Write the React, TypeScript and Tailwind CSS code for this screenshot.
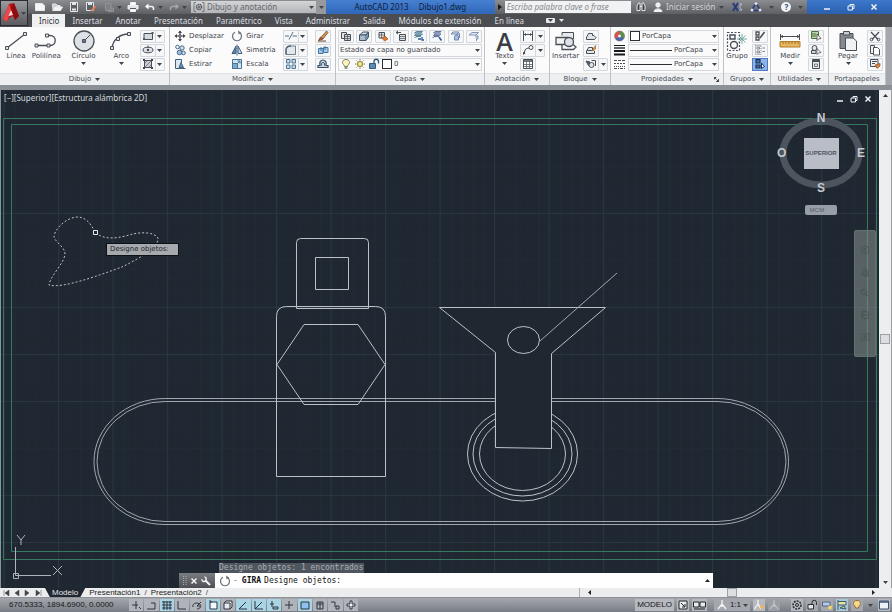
import React, { useState } from 'react';
import clsx from 'clsx';

type IconProps = {
  w?: number;
  h?: number;
  color?: string;
  children: React.ReactNode;
};

function Icon({ w = 12, h = 12, color = '#4a4f57', children }: IconProps) {
  return (
    <svg
      width={w}
      height={h}
      viewBox={`0 0 ${w} ${h}`}
      fill="none"
      stroke={color}
      strokeWidth={1}
      className="shrink-0"
      aria-hidden="true"
    >
      {children}
    </svg>
  );
}

function Caret({ light = false }: { light?: boolean }) {
  return (
    <svg width="5" height="3" viewBox="0 0 5 3" className="shrink-0" aria-hidden="true">
      <path d="M0 0H5L2.5 3Z" fill={light ? '#e5e7eb' : '#3f444b'} />
    </svg>
  );
}

const icons = {
  rect: <Icon><path d="M2 3.5H10.5V9.5H2Z" fill="#d3d9df" /><path d="M1 8H3V10H1ZM9.5 2H11.5V4H9.5Z" fill="#555" stroke="none" /></Icon>,
  ellipse: <Icon><ellipse cx="6" cy="6" rx="5" ry="2.8" fill="#dde2e8" /><circle cx="6" cy="6" r="1.2" fill="#444" stroke="none" /><path d="M6 1.5V4" /></Icon>,
  hatch: <Icon><path d="M2.5 2.5H9.5V9.5H2.5Z" fill="#c9ced4" /><path d="M2 6L6 2M2 10L10 2M6 10L10 6" strokeWidth=".6" /><path d="M1 1H3V3H1ZM9 1H11V3H9ZM1 9H3V11H1ZM9 9H11V11H9Z" fill="#444" stroke="none" /></Icon>,
  move: <Icon><path d="M6 1V11M1 6H11" strokeWidth="1.2" /><path d="M4 3L6 .5L8 3ZM4 9L6 11.5L8 9ZM3 4L.5 6L3 8ZM9 4L11.5 6L9 8Z" fill="#444" stroke="none" /><path d="M5 5H7V7H5Z" fill="#fff" /></Icon>,
  copy: <Icon color="#46698c"><circle cx="3.5" cy="3" r="1.8" /><circle cx="8" cy="4" r="2.2" fill="#cfe0ee" /><circle cx="5.5" cy="8.5" r="2.3" fill="#9ebdd6" /><circle cx="9.5" cy="9" r="1.8" fill="#cfe0ee" /></Icon>,
  stretch: <Icon color="#45627d"><path d="M1.5 1.5H7.5V10.5H1.5Z" fill="#dbe7f1" /><path d="M5 9.5L7 4.5L9.5 9.5Z" fill="#6e94b5" /><path d="M6 10.5H11.5" /></Icon>,
  rotate: <Icon color="#6a7078"><path d="M4 2.2A4.5 4.5 0 1 0 8.5 2.5" strokeWidth="1.2" /><path d="M7 .5L10 2.5L7.5 4.5Z" fill="#6a7078" stroke="none" /></Icon>,
  mirror: <Icon color="#3f5f80"><path d="M5 2V9.5H1Z" fill="#5d83a6" /><path d="M7 2V9.5H11Z" fill="#c9dbe9" /><path d="M6 .5V11.5" strokeDasharray="2 1" /></Icon>,
  scale: <Icon color="#44729a"><path d="M1.5 1.5H10.5V10.5H1.5Z" fill="#d2e4f1" /><path d="M1.5 5.5H6.5V10.5H1.5Z" fill="#7fa9c9" /><path d="M6 6L9 3M6.5 3H9V5.5" /></Icon>,
  trim: <Icon color="#5b6f83"><path d="M0 6H4M7.5 6H12" strokeWidth="1.2" /><path d="M4 9.5L8 2" /></Icon>,
  fillet: <Icon color="#556270"><path d="M1 10.5V6C1 3 3 2 6 2H10.5V10.5Z" fill="#e3e8ec" strokeWidth=".8" /><path d="M1 10.5V6C1 3 3 2 6 2" strokeWidth="1.3" /></Icon>,
  array: <Icon color="#4d7598"><path d="M1.5 1.5H5V5H1.5ZM7 1.5H10.5V5H7ZM1.5 7H5V10.5H1.5ZM7 7H10.5V10.5H7Z" fill="#c9dcea" /></Icon>,
  erase: <Icon color="#6b4a2a"><path d="M4 7.5L9.5 1L11 2.5L6 9Z" fill="#d99a4e" strokeWidth=".8" /><path d="M1.5 10.5L3.5 7L6 9Z" fill="#c4523f" strokeWidth=".8" /><path d="M1 11H9" /></Icon>,
  explode: <Icon color="#3d75a8"><path d="M1.5 4.5H6V9.5H1.5ZM6.5 3.5H11V8.5H6.5Z" fill="#a7c9e4" /><path d="M4 3V7M8 2V6" /></Icon>,
  offset: <Icon color="#35506b"><path d="M1 9.5H11V7.5H9C10 4 8 2 6 2S2 4 3 7.5H1Z" fill="#c8d4de" strokeWidth="1.2" /><path d="M4.5 7.5C4 5 5 4.5 6 4.5S8 5 7.5 7.5" /></Icon>,
  layer1: <Icon><path d="M1.5 2.5H6.5V8.5H1.5Z" fill="#e3e3e3" /><path d="M4.5 4.5H10.5V10.5H4.5Z" fill="#cdd3d9" /><path d="M5 6.5H10M5 8.5H10M7.5 5V10" strokeWidth=".7" /></Icon>,
  layer2: <Icon color="#44546a"><path d="M1.5 5L5 2H10.5L8 5Z" fill="#cfdbe6" /><path d="M1.5 5H8V10.5H1.5Z" fill="#a9bccd" /><path d="M8 5L10.5 2V7L8 10.5" fill="#7a93a9" /></Icon>,
  layer3: <Icon><path d="M2 2.5H7.5V8H2Z" fill="#e4e6e8" /><path d="M2 5H8M4.5 2.5V8" strokeWidth=".7" /><path d="M5 8L8 6L11 9L7.5 11Z" fill="#dc7b32" stroke="#a4511d" strokeWidth=".7" /></Icon>,
  layer4: <Icon><path d="M1 2.5H6M1 2.5L3 1M1 2.5L3 4" /><path d="M4.5 4.5H10.5V10.5H4.5Z" fill="#dfe2e5" /><path d="M5 6.5H10M5 8.5H10" strokeWidth=".7" /></Icon>,
  layer5: <Icon color="#3f6f86"><path d="M1.5 3L3.5 1.5H9.5L8 3ZM1.5 5.5L3 4H9.5L8 5.5ZM1.5 8L3 6.5H8" fill="#9fc7d8" strokeWidth=".8" /><path d="M5 9H8M9 7V10H11" stroke="#275a94" strokeWidth="1.3" /></Icon>,
  layer6: <Icon color="#4a5f86"><path d="M2.5 3L4 1.5H10L8.5 3ZM2.5 5.5L4 4H10L8.5 5.5ZM1.5 8L3 6.5H8" fill="#b2c2e0" strokeWidth=".8" /><path d="M8 7L10.5 10.5" stroke="#2c55a4" strokeWidth="1.5" /></Icon>,
  layer7: <Icon color="#7385ad"><path d="M1 4L3 2H9L7 4Z" fill="#dfe6f2" /><path d="M6 5.5L9.5 3.5V8" /><path d="M4.5 7A2 2 0 0 1 8.5 7V10H4.5Z" fill="#a9bfe8" /></Icon>,
  layer8: <Icon color="#8593b5"><path d="M1 5L4 2.5H10.5L8 5Z" fill="#e1e7f1" /><path d="M7 6H10V9H8.5V11" fill="#b8c7e7" /></Icon>,
  bulb: <Icon color="#7c7a60"><path d="M6 1.5C3.5 1.5 2.5 3 2.5 4.5C2.5 6 4.5 7 4.5 8.5H7.5C7.5 7 9.5 6 9.5 4.5C9.5 3 8.5 1.5 6 1.5Z" fill="#fbf5bd" /><path d="M4.5 10H7.5" strokeWidth="1.5" /></Icon>,
  sun: <Icon color="#7c7434"><circle cx="6" cy="6" r="2.5" fill="#fbee8c" /><path d="M6 1V2.5M6 9.5V11M1 6H2.5M9.5 6H11M2.5 2.5L3.5 3.5M8.5 8.5L9.5 9.5M2.5 9.5L3.5 8.5M8.5 3.5L9.5 2.5" /></Icon>,
  lock: <Icon color="#365a7d"><path d="M1.5 5.5H7.5V10.5H1.5Z" fill="#5d8ab0" /><path d="M6 5V3.5A2 2 0 0 1 10.5 3.5V5.5" strokeWidth="1.3" /></Icon>,
  dim: <Icon><path d="M1.5 1V11M10.5 1V11M2 4.5H10" /><path d="M2 4.5L4 3V6ZM10 4.5L8 3V6Z" fill="#444" stroke="none" /></Icon>,
  leader: <Icon><path d="M2 10C2.5 5 4 4 7 4" strokeWidth="1.2" /><circle cx="9" cy="3.5" r="2" /><path d="M1 11L1 8L3.5 9Z" fill="#444" stroke="none" /></Icon>,
  table: <Icon><path d="M1.5 1.5H10.5V10.5H1.5Z" fill="#fff" /><path d="M2 2H10V4H2Z" fill="#69727d" stroke="none" /><path d="M1.5 6.5H10.5M1.5 8.5H10.5M4.5 4V10.5M7.5 4V10.5" strokeWidth=".7" /></Icon>,
  block1: <Icon><path d="M2 6.5L3.5 3.5H7.5V6.5Z" fill="#e3e7eb" /><path d="M1.5 6.5V9.5H9.5L11 7.5L9 5.5H7.5" fill="#dde5ec" /></Icon>,
  block2: <Icon><path d="M2 6.5L3.5 3.5H7.5V6.5ZM1.5 6.5V9.5H9.5V7" fill="#e3e7eb" /><path d="M7.5 6L10.5 1.5V5L8 7Z" fill="#e39543" stroke="#a4622a" strokeWidth=".7" /></Icon>,
  block3: <Icon><path d="M1 3L5 4L3.5 7.5Z" fill="#59626c" /><circle cx="6.5" cy="7" r="2.5" fill="#dfe6ec" /><path d="M6.5 2.5H10.5V8" /></Icon>,
  wheel: <Icon w={13}><circle cx="6.5" cy="6" r="5" fill="#d9534a" stroke="#8d7474" strokeWidth=".6" /><path d="M6.5 6V1A5 5 0 0 1 11 8Z" fill="#5a8f4e" stroke="none" /><path d="M6.5 6L11 8A5 5 0 0 1 2.5 9Z" fill="#4469ae" stroke="none" /><circle cx="6.5" cy="6" r="1.5" fill="#eee" stroke="none" /></Icon>,
  lineweight: <Icon w={13} color="#15181c"><path d="M1 1.5H12" /><path d="M1 4H12" strokeWidth="1.3" /><path d="M1 7H12" strokeWidth="2" /><path d="M1 10.5H12" strokeWidth="2" /></Icon>,
  linetype: <Icon w={13}><path d="M1 2.5H12" strokeDasharray="3 1" /><path d="M1 5.5H12" strokeDasharray="2 1" /><path d="M1 8.5H12" strokeDasharray="1 1" /><path d="M1 10.5H12" strokeDasharray="3 1 1 1" /></Icon>,
  group1: <Icon><path d="M2 2H5V5H2ZM2 7H5V10H2Z" strokeWidth="1.3" /><path d="M6 8L10.5 2" strokeWidth="1.6" /></Icon>,
  group2: <Icon color="#808790"><path d="M1.5 1.5H7V10.5H1.5Z" strokeDasharray="1 1" /><path d="M3 3H5.5V5H3ZM3 7H5.5V9H3Z" /><path d="M8.5 4H11M8.5 7.5H11" /></Icon>,
  group3: <Icon w={14} color="#14305c"><path d="M3 1.5H7V5H3ZM3 7H7V10H3Z" fill="#4f6f9f" strokeWidth="1.2" /><path d="M8.5 5V10.5L11.5 8.5Z" fill="#fff" /></Icon>,
  select1: <Icon color="#4b7042"><path d="M1.5 1.5H8.5V8.5H1.5Z" fill="#b8d6a8" /><path d="M3 3V7M5 3V7" /><path d="M7 4V10.5L8.5 9L11 8.5Z" fill="#fff" stroke="#444" strokeWidth=".8" /></Icon>,
  select2: <Icon><circle cx="4.5" cy="4" r="2.5" fill="#e3e7eb" /><path d="M1.5 6.5H6V9.5H1.5Z" fill="#cfd6dc" /><path d="M7 4.5V10.5L8.5 9L11 8.5Z" fill="#fff" strokeWidth=".8" /></Icon>,
  calc: <Icon><path d="M2.5 1.5H9.5V10.5H2.5Z" fill="#e6e9ec" /><path d="M3 3H9" strokeWidth="2" /><path d="M4.5 6H7.5V8.5H4.5Z" strokeWidth=".7" /></Icon>,
  cut: <Icon><path d="M2 2L9 9.5M10 2L3 9.5" strokeWidth="1.3" /><circle cx="2.5" cy="9.5" r="1.3" /><circle cx="9.5" cy="9.5" r="1.3" /></Icon>,
  copyClip: <Icon><path d="M1.5 1.5H5.5V9.5H1.5Z" fill="#eef0f2" /><path d="M4.5 3.5H8.5L10.5 5.5V11H4.5Z" fill="#fff" /></Icon>,
  paint: <Icon><path d="M1.5 1.5H9V8.5H1.5Z" fill="#eceef1" /><path d="M3 3.5H8M3 5.5H6" /><path d="M6 7L11 5.5V8L8 10.5Z" fill="#d98344" stroke="#8d5022" strokeWidth=".7" /></Icon>,
};

type ToolProps = { label: string; icon: React.ReactNode; menu?: boolean; className?: string };

function BigTool({ label, icon, menu, className }: ToolProps) {
  return (
    <button className={clsx('flex flex-col items-center self-stretch pt-[3px] leading-[9px]', className)}>
      <span className="flex h-[22px] items-center">{icon}</span>
      <span>{label}</span>
      {menu && <span className="flex h-[5px] items-center"><Caret /></span>}
    </button>
  );
}

function SmallTool({ label, icon, menu }: ToolProps) {
  return (
    <button
      aria-label={label}
      className="flex h-[13px] items-center rounded-[1px] border border-[#d3d6da] bg-[#f6f7f8]"
    >
      <span className="px-[1px]">{icon}</span>
      {menu && (
        <span className="flex h-full w-[9px] items-center justify-center border-l border-[#d3d6da]">
          <Caret />
        </span>
      )}
    </button>
  );
}

function TextTool({ label, icon }: ToolProps) {
  return (
    <button className="flex h-[13px] items-center gap-[3px]">
      {icon}
      <span>{label}</span>
    </button>
  );
}

type PanelProps = {
  title: string;
  children: React.ReactNode;
  caret?: boolean;
  launcher?: boolean;
  tight?: boolean;
};

function Panel({ title, children, caret = true, launcher, tight }: PanelProps) {
  return (
    <section className="flex min-w-0 flex-col border-r border-[#bfc3c8]">
      <div className={clsx('flex h-[46px] items-center justify-between', tight ? 'px-[2px]' : 'px-1')}>
        {children}
      </div>
      <h2 className="relative flex h-3 items-center justify-center gap-1 border-t border-[#e0e2e5] bg-[#eeeff1] text-[#4a4f56]">
        {title}
        {caret && <Caret />}
        {launcher && (
          <svg width="5" height="5" viewBox="0 0 5 5" className="absolute right-1" aria-hidden="true">
            <path d="M0 0H2V1H1V2H0ZM1 1L4 4M5 2V5H2Z" fill="#3f444b" stroke="#3f444b" strokeWidth=".6" />
          </svg>
        )}
      </h2>
    </section>
  );
}

function Column({ children }: { children: React.ReactNode }) {
  return <div className="flex flex-col items-start gap-[1px]">{children}</div>;
}

type ComboProps = { label: string; value: string; children?: React.ReactNode };

function Combo({ label, value, children }: ComboProps) {
  return (
    <div className="flex h-[13px] w-full items-center gap-[2px] border border-[#d3d6da] bg-[#fafafa] px-[1px]">
      {children}
      <select aria-label={label} className="min-w-0 flex-1 appearance-none bg-transparent outline-none">
        <option>{value}</option>
      </select>
      <Caret />
    </div>
  );
}

const tabs = [
  'Inicio', 'Insertar', 'Anotar', 'Presentación', 'Paramétrico', 'Vista',
  'Administrar', 'Salida', 'Módulos de extensión', 'En línea',
];

function WindowButtons() {
  return (
    <>
      <button aria-label="Minimizar"><Icon w={8} h={8} color="#f1f3f6"><path d="M1 6H7" strokeWidth="1.5" /></Icon></button>
      <button aria-label="Restaurar"><Icon w={8} h={8} color="#f1f3f6"><path d="M1 3H5.5V7H1ZM3 3V1.5H7V5.5H5.5" /></Icon></button>
      <button aria-label="Cerrar"><Icon w={8} h={8} color="#f1f3f6"><path d="M1.5 1.5L6.5 6.5M6.5 1.5L1.5 6.5" strokeWidth="1.5" /></Icon></button>
    </>
  );
}

function TitleBar() {
  return (
    <div className="flex h-[14px] items-center bg-linear-to-b from-[#8b8d91] to-[#5d5f63]">
      <nav className="flex w-[163px] shrink-0 items-center justify-between pr-1 pl-[6px]" aria-label="Acceso rápido">
        <button aria-label="Nuevo"><Icon color="#e8eaec"><path d="M1.5 2.5H8L10.5 4.5V9.5H1.5Z" fill="#f5f5f5" /></Icon></button>
        <button aria-label="Abrir"><Icon color="#e8eaec"><path d="M1.5 3H5L6 4.5H9V6H4L2 9.5Z" fill="#c9ccd0" /><path d="M2 9.5L4 6H11.5L9.5 9.5Z" fill="#f5f5f5" /></Icon></button>
        <button aria-label="Guardar"><Icon color="#e3e6ea"><path d="M2.5 1.5H9.5V10.5H2.5Z" fill="#5a5f68" /><path d="M4 3H8M4 8.5H8" strokeWidth="2" /></Icon></button>
        <button aria-label="Guardar como"><Icon color="#e3e6ea"><path d="M1.5 1.5H8.5V9.5H1.5Z" fill="#5a5f68" /><path d="M3 3H7" strokeWidth="2" /><path d="M6 10L10.5 5.5" stroke="#e47b4e" strokeWidth="2" /></Icon></button>
        <button aria-label="Nube" className="flex items-center gap-[2px]"><Icon color="#909398"><path d="M2.5 2.5H8V9.5H2.5ZM8 7H10.5V10.5H5" fill="#7d8085" /></Icon><Caret /></button>
        <button aria-label="Trazar"><Icon color="#eceef0"><path d="M3.5 1.5H8.5V4H3.5ZM3.5 8H8.5V10.5H3.5Z" fill="#fff" /><path d="M1 4.5H11V8H1Z" fill="#e4e6e9" /><path d="M3 7.5H9" stroke="#55585d" /></Icon></button>
        <button aria-label="Deshacer" className="flex items-center gap-[2px]"><Icon color="#f4f5f6"><path d="M2 5.5H7.5A2 2 0 0 1 9.5 7.5V9" strokeWidth="1.5" /><path d="M4.5 2.5L1 5.5L4.5 8.5Z" fill="#fff" stroke="none" /></Icon><Caret /></button>
        <button aria-label="Rehacer" className="flex items-center gap-[2px]"><Icon color="#a3a6ab"><path d="M10 5.5H4.5A2 2 0 0 0 2.5 7.5V9" strokeWidth="1.5" /><path d="M7.5 2.5L11 5.5L7.5 8.5Z" fill="#a3a6ab" stroke="none" /></Icon><Caret /></button>
      </nav>
      <div className="flex h-3 w-[125px] shrink-0 items-center gap-[2px] bg-linear-to-b from-[#d4d5d7] to-[#b3b5b8] px-[2px] text-[8px] text-[#64676c]">
        <Icon color="#55585d"><circle cx="6" cy="6" r="2.5" strokeDasharray="1.5 .5" strokeWidth="1.5" /><circle cx="6" cy="6" r=".7" /><path d="M3 1.5H1V10.5H3M9 1.5H11V10.5H9" strokeWidth=".7" /></Icon>
        <select aria-label="Espacio de trabajo" className="min-w-0 flex-1 appearance-none bg-transparent outline-none">
          <option>Dibujo y anotación</option>
        </select>
        <Caret />
      </div>
      <button aria-label="Personalizar" className="flex h-full w-[10px] shrink-0 items-center justify-center bg-[#97999d]"><Caret /></button>
      <h1 className="flex h-full min-w-0 flex-[171] items-center justify-center gap-[10px] bg-linear-to-b from-[#4680d0] to-[#3067b9] text-[8px] whitespace-nowrap text-[#0d1d3a]">
        <span>AutoCAD 2013</span>
        <span>Dibujo1.dwg</span>
      </h1>
      <span className="flex w-[10px] justify-center">
        <svg width="4" height="6" viewBox="0 0 4 6" aria-hidden="true"><path d="M0 0L4 3L0 6Z" fill="#17191c" /></svg>
      </span>
      <input
        aria-label="Buscar"
        placeholder="Escriba palabra clave o frase"
        className="h-3 min-w-0 flex-[124] bg-[#f1f2f3] px-[2px] text-[8px] italic outline-none placeholder:text-[#85888d]"
      />
      <div className="flex w-[176px] shrink-0 items-center pl-1">
        <button aria-label="Buscar ahora" className="mr-[5px]"><Icon color="#e6e8ea"><path d="M2 9.5V5L3.5 2H5V9.5ZM7 9.5V2H8.5L10 5V9.5Z" fill="#3b3e43" /><path d="M5 5.5H7" /></Icon></button>
        <button className="flex items-center gap-[2px] text-[8px] text-[#d2d4d7]">
          <Icon color="#f0f1f2"><circle cx="6" cy="4" r="2.2" fill="#f0f1f2" /><path d="M2 10.5C2 7 10 7 10 10.5Z" fill="#f0f1f2" /></Icon>
          Iniciar sesión
        </button>
        <span className="flex flex-1 items-center justify-around">
          <Caret />
          <button aria-label="Exchange"><Icon color="#2b3a7d"><path d="M2 2L7 10M2 10L7 2" strokeWidth="2" /><path d="M8 3H11L8.5 6L11 9H8" stroke="#b5b9da" /></Icon></button>
          <button aria-label="Autodesk 360"><Icon color="#2e3d77"><path d="M6 2L10.5 9.5H1.5Z" strokeWidth="1.5" /><circle cx="6" cy="2.5" r="1.5" fill="#dfe1ee" stroke="none" /><circle cx="2" cy="9" r="1.5" fill="#dfe1ee" stroke="none" /><circle cx="10" cy="9" r="1.5" fill="#dfe1ee" stroke="none" /></Icon></button>
          <Caret />
          <button aria-label="Ayuda" className="flex h-[10px] w-[10px] items-center justify-center rounded-full bg-[#f3f4f6] text-[8px] font-bold text-[#2d4a86]">?</button>
          <Caret />
        </span>
      </div>
      <div className="flex h-full w-[85px] shrink-0 items-center justify-between bg-linear-to-b from-[#3d78ca] to-[#2b60b0] pr-[14px] pl-4">
        <WindowButtons />
      </div>
    </div>
  );
}

function Header() {
  const [active, setActive] = useState('Inicio');

  return (
    <header className="flex bg-[#4b4d51]">
      <button aria-label="Menú de la aplicación" className="flex h-[26px] w-7 shrink-0 items-center gap-[1px] border border-[#2b2c2f] bg-linear-to-b from-[#9a9c9f] to-[#595b5f] pl-[1px]">
        <svg width="18" height="22" viewBox="0 0 18 22" className="shrink-0" aria-hidden="true">
          <path d="M1 17L7 2L12 1L17 14L13 18L11 14L7 16L5 20Z" fill="#b3141a" />
          <path d="M1 17L7 2L9 8L5 20Z" fill="#e8484a" />
          <path d="M9 8L11 13L6.500 14Z" fill="#fbe3e1" />
          <path d="M12 1L17 14L13 18L9 6Z" fill="#8d0d12" />
        </svg>
        <Caret />
      </button>
      <div className="min-w-0 flex-1">
        <TitleBar />
        <nav className="flex h-[13px] items-stretch pl-1 text-[8px] whitespace-nowrap" aria-label="Cinta">
          {tabs.map((tab) => (
            <button
              key={tab}
              onClick={() => setActive(tab)}
              className={clsx(
                'pr-[6px] pl-[7px] leading-[13px]',
                tab === active ? 'bg-[#eff0f1] text-[#33363b]' : 'text-[#dcdee0]',
              )}
            >
              {tab}
            </button>
          ))}
          <button aria-label="Minimizar cinta" className="ml-4 flex items-center gap-1">
            <span className="flex h-[5px] w-[9px] items-center justify-center rounded-[1px] bg-[#e5e7eb]"><Caret /></span>
            <Caret light />
          </button>
        </nav>
      </div>
    </header>
  );
}

function Ribbon() {
  return (
    <div className="flex border-b-[5px] border-[#8c9097] bg-[#fbfbfc] font-['DejaVu_Sans',sans-serif] text-[7px] whitespace-nowrap text-[#3e434a]">
      <div className="grid flex-1 grid-cols-[170fr_166fr_149fr_65fr_61fr_113fr_47fr_58fr_57fr]">
        <Panel title="Dibujo">
          <BigTool label="Línea" icon={<Icon w={24} h={20}><path d="M3 17L21 3" strokeWidth="1.3" /><path d="M1.5 15.5H4.5V18.5H1.5ZM19.5 1.5H22.5V4.5H19.5Z" fill="#dfe3e7" /></Icon>} />
          <BigTool label="Polilínea" icon={<Icon w={24} h={20}><path d="M13 4.5H16C23 4.5 23 14.5 16 14.5H2" strokeWidth="1.3" /><path d="M11.5 3H14.5V6H11.5ZM1 13H4V16H1ZM13 13H16V16H13Z" fill="#dfe3e7" /></Icon>} />
          <BigTool menu className="w-[38px]" label="Círculo" icon={<Icon w={24} h={22}><circle cx="12" cy="11" r="10" fill="#dde1e6" strokeWidth="1.3" /><path d="M12 11L18 5" /><path d="M10.5 9.5H13.5V12.5H10.5Z" fill="#69798c" /></Icon>} />
          <BigTool menu className="w-[30px]" label="Arco" icon={<Icon w={24} h={20}><path d="M3 17C4 9 10 3 20 3" strokeWidth="1.3" /><path d="M1.5 15.5H4.5V18.5H1.5ZM7.5 6.5H10.5V9.5H7.5ZM18.5 1.5H21.5V4.5H18.5Z" fill="#dfe3e7" /></Icon>} />
          <Column>
            <SmallTool menu label="Rectángulo" icon={icons.rect} />
            <SmallTool menu label="Elipse" icon={icons.ellipse} />
            <SmallTool menu label="Sombreado" icon={icons.hatch} />
          </Column>
        </Panel>
        <Panel title="Modificar">
          <Column>
            <TextTool label="Desplazar" icon={icons.move} />
            <TextTool label="Copiar" icon={icons.copy} />
            <TextTool label="Estirar" icon={icons.stretch} />
          </Column>
          <Column>
            <TextTool label="Girar" icon={icons.rotate} />
            <TextTool label="Simetría" icon={icons.mirror} />
            <TextTool label="Escala" icon={icons.scale} />
          </Column>
          <Column>
            <SmallTool menu label="Recortar" icon={icons.trim} />
            <SmallTool menu label="Empalme" icon={icons.fillet} />
            <SmallTool menu label="Matriz" icon={icons.array} />
          </Column>
          <Column>
            <SmallTool label="Borrar" icon={icons.erase} />
            <SmallTool label="Descomponer" icon={icons.explode} />
            <SmallTool label="Desfase" icon={icons.offset} />
          </Column>
        </Panel>
        <Panel title="Capas" tight>
          <div className="flex w-full flex-col gap-[1px]">
            <div className="flex justify-between">
              <SmallTool label="Propiedades de capas" icon={icons.layer1} />
              <SmallTool label="Definir como actual" icon={icons.layer2} />
              <SmallTool label="Igualar" icon={icons.layer3} />
              <SmallTool label="Previo" icon={icons.layer4} />
              <SmallTool label="Aislar" icon={icons.layer5} />
              <SmallTool label="Desaislar" icon={icons.layer6} />
              <SmallTool label="Inutilizar" icon={icons.layer7} />
              <SmallTool label="Desactivar" icon={icons.layer8} />
            </div>
            <Combo label="Estado de capa" value="Estado de capa no guardado" />
            <Combo label="Capa" value="0">
              {icons.bulb}
              {icons.sun}
              {icons.lock}
              <span className="h-[10px] w-[10px] border border-[#2c2f33] bg-white" />
            </Combo>
          </div>
        </Panel>
        <Panel title="Anotación">
          <BigTool menu className="w-[32px]" label="Texto" icon={<span className="font-['Open_Sans',sans-serif] text-[25px] leading-[20px] font-semibold text-[#3a3e44]">A</span>} />
          <Column>
            <SmallTool menu label="Cota" icon={icons.dim} />
            <SmallTool menu label="Directriz" icon={icons.leader} />
            <SmallTool label="Tabla" icon={icons.table} />
          </Column>
        </Panel>
        <Panel title="Bloque" tight>
          <BigTool label="Insertar" icon={<Icon w={24} h={22}><path d="M8 5.5V2.5H19.5V9H16" fill="#e7eaed" /><path d="M2 7.5H13.5V14.5H2Z" fill="#f2f3f5" strokeWidth="1.3" /><circle cx="15" cy="12" r="4.5" fill="#dce2e8" strokeWidth="1.3" /><path d="M8 14.5V19.5H19.5L22 17L19 14.5" strokeWidth="1.3" /></Icon>} />
          <Column>
            <SmallTool label="Crear" icon={icons.block1} />
            <SmallTool label="Editar" icon={icons.block2} />
            <SmallTool menu label="Atributos" icon={icons.block3} />
          </Column>
        </Panel>
        <Panel title="Propiedades" launcher tight>
          <div className="flex w-full flex-col gap-[1px] pr-[2px]">
            <div className="flex items-center gap-[2px]">
              {icons.wheel}
              <Combo label="Color" value="PorCapa">
                <span className="h-[10px] w-[10px] shrink-0 border border-[#2c2f33] bg-white" />
              </Combo>
            </div>
            <div className="flex items-center gap-[2px]">
              {icons.lineweight}
              <Combo label="Grosor de línea" value="PorCapa">
                <span className="h-px w-[42px] shrink-0 bg-[#2c2f33]" />
              </Combo>
            </div>
            <div className="flex items-center gap-[2px]">
              {icons.linetype}
              <Combo label="Tipo de línea" value="PorCapa">
                <span className="h-px w-[42px] shrink-0 bg-[#2c2f33]" />
              </Combo>
            </div>
          </div>
        </Panel>
        <Panel title="Grupos" tight>
          <BigTool label="Grupo" icon={<Icon w={22} h={22}><path d="M1.5 2.5H13.5V20.5H1.5Z" strokeDasharray="2 1.5" strokeWidth="1.2" /><path d="M4 5H9V9H4Z" strokeWidth="1.4" /><circle cx="8" cy="15" r="3.5" strokeWidth="1.4" /><path d="M16 4V14M11 9H21M12.5 5.5L19.5 12.5M19.5 5.5L12.5 12.5" stroke="#79a9a6" /></Icon>} />
          <Column>
            <SmallTool label="Desagrupar" icon={icons.group1} />
            <SmallTool label="Editar grupo" icon={icons.group2} />
            <button aria-label="Selección de grupo" className="flex h-[13px] items-center border border-[#5078c0] bg-[#8db4ea]">{icons.group3}</button>
          </Column>
        </Panel>
        <Panel title="Utilidades">
          <BigTool menu className="w-[30px]" label="Medir" icon={<Icon w={24} h={20}><path d="M2 5.5H22M2.5 3V9M21.5 3V9" /><path d="M2 5.5L5 4V7ZM22 5.5L19 4V7Z" fill="#444" stroke="none" /><path d="M2 10.5H22V16H2Z" fill="#e9b65e" stroke="#b07c2c" /><path d="M5 11V13M8 11V13M11 11V13M14 11V13M17 11V13M20 11V13" stroke="#7b551b" strokeWidth=".7" /></Icon>} />
          <Column>
            <SmallTool label="Seleccionar todo" icon={icons.select1} />
            <SmallTool label="Selección rápida" icon={icons.select2} />
            <SmallTool label="Calculadora" icon={icons.calc} />
          </Column>
        </Panel>
        <Panel title="Portapapeles" caret={false} tight>
          <BigTool menu className="w-[34px]" label="Pegar" icon={<Icon w={22} h={22}><path d="M3 3.5H16V18.5H3Z" fill="#85898f" /><path d="M6.5 1.5H12.5V5H6.5Z" fill="#c9ccd0" /><path d="M8.5 8H16L19.5 11V20.5H8.5Z" fill="#f1f2f3" /></Icon>} />
          <Column>
            <SmallTool label="Cortar" icon={icons.cut} />
            <SmallTool label="Copiar al portapapeles" icon={icons.copyClip} />
            <SmallTool label="Igualar propiedades" icon={icons.paint} />
          </Column>
        </Panel>
      </div>
      <div className="w-[6px] shrink-0 bg-[#a4a8ae]" />
    </div>
  );
}

function Drawing() {
  return (
    <svg viewBox="0 90 879 498" className="block w-full" fill="none" aria-label="Dibujo1">
      <defs>
        <pattern id="minor" x="4" y="72" width="10.9" height="9.4" patternUnits="userSpaceOnUse">
          <path d="M0 .5H10.9M.5 0V9.4" stroke="#212a35" strokeWidth="1" />
        </pattern>
        <pattern id="major" x="3.5" y="72" width="54.5" height="47" patternUnits="userSpaceOnUse">
          <path d="M0 .5H54.5M.5 0V47" stroke="#2a3541" strokeWidth="1" />
        </pattern>
      </defs>
      <rect y="90" width="879" height="498" fill="url(#minor)" />
      <rect y="90" width="879" height="498" fill="url(#major)" />

      <g stroke="#37795e">
        <path d="M3.5 118.5H876.5V559.5H3.5Z" />
        <path d="M11.5 124.5H867.5V551.5H11.5Z" />
      </g>

      <g stroke="#bcc1c7">
        <path d="M165 398.5H717A71.5 63 0 0 1 717 524.5H165A71 63 0 0 1 165 398.5Z" stroke="#9fa6ad" />
        <path d="M165 401.5H717A69 60 0 0 1 717 521.5H165A68 60 0 0 1 165 401.5Z" stroke="#9fa6ad" />
        <path d="M296.5 308.5V242.5Q296.5 238.5 300.5 238.5H364.5Q368.5 238.5 368.5 242.5V308.5Z" />
        <path d="M315.5 257.5H348.5V289.5H315.5Z" />
        <path d="M276.5 476.5V316.5Q276.5 306.5 286.5 306.5H375.5Q385.5 306.5 385.5 316.5V476.5Z" />
        <path d="M277 364.5L304 324.5H358L385 364.5L358 404.5H304Z" />
        <ellipse cx="522.5" cy="454" rx="55" ry="47" />
        <ellipse cx="522.5" cy="454" rx="49.5" ry="42" />
        <ellipse cx="522.5" cy="454" rx="43" ry="36.5" />
        <path d="M439.5 307.5H605.5L551.5 353.5V448.5L495.5 447.5V352.5Z" fill="#1f2731" />
        <ellipse cx="523.5" cy="340" rx="16" ry="13.5" />
        <path d="M540 341L617 273" stroke="#9fa6ad" />
      </g>

      <path
        d="M95 232C90 222 85 217 77 217C65 218 54 230 54 237C56 243 65 247 65 254C64 264 50 276 49 285C62 289 100 275 122 267C138 259 159 248 158 238C154 232 142 232 133 234C122 237 105 242 95 232Z"
        stroke="#bcc1c7"
        strokeDasharray="2 2"
      />
      <path d="M93.5 230.5H97.5V234.5H93.5Z" stroke="#e4e7ea" fill="#1f2731" />

      <g stroke="#aeb4bb">
        <path d="M15.5 547V575.5H51M13.5 573.5H18.5V578.5H13.5Z" />
        <path d="M53 566L62 575M62 566L53 575M17 535L21 540L25 535M21 540V545" />
      </g>
    </svg>
  );
}

function ViewCube() {
  return (
    <div className="absolute top-[22px] right-[12px] flex flex-col items-center font-['Liberation_Sans',sans-serif]">
      <div className="relative flex h-[82px] w-[92px] items-center justify-center text-[12px] leading-3 font-bold text-[#c5c9ce]">
        <svg viewBox="0 0 92 82" className="absolute inset-0" fill="none" aria-hidden="true">
          <ellipse cx="46" cy="41" rx="38" ry="32" stroke="#4c545e" strokeWidth="7" />
        </svg>
        <span className="absolute top-0">N</span>
        <span className="absolute bottom-0">S</span>
        <span className="absolute left-[2px]">O</span>
        <span className="absolute right-[2px]">E</span>
        <button className="relative h-[31px] w-[35px] bg-[#b9bec6] text-[6px] text-[#4d535c]">SUPERIOR</button>
      </div>
      <button className="mt-[11px] h-[10px] w-8 rounded-[2px] bg-[#989ea7] pr-2 text-[6px] leading-[10px] text-[#565c66]">MCM</button>
    </div>
  );
}

function NavigationBar() {
  return (
    <div className="absolute top-[140px] right-[3px] flex h-[127px] w-[22px] flex-col items-center justify-around rounded-[2px] border border-[#66706f] bg-[#7e8a88]/60 py-2">
      <Icon color="#4b5656"><circle cx="6" cy="6" r="4" /><circle cx="6" cy="6" r="1.5" /></Icon>
      <Icon color="#4b5656"><path d="M3 10V5M5 10V2M7 10V2M9 10V4M3 7L5 10H9" /></Icon>
      <Icon color="#4b5656"><circle cx="5" cy="5" r="3" /><path d="M7 7L11 11M2 2L10 10" /></Icon>
      <Icon color="#4b5656"><circle cx="6" cy="6" r="4" /><path d="M2 6H10M6 2C3 5 3 8 6 10" /></Icon>
      <Icon color="#4b5656"><path d="M2 3H10V9H2ZM5 4.5L8 6L5 7.5Z" /></Icon>
    </div>
  );
}

function CommandLine() {
  return (
    <div className="absolute right-[166px] bottom-0 left-[179px] font-['DejaVu_Sans_Mono',monospace] text-[8px]">
      <p className="ml-10 h-[10px] w-fit bg-[#4f565e] leading-[10px] text-[#a9afb5]">Designe objetos: 1 encontrados</p>
      <div className="flex h-[15px] items-center bg-white">
        <div className="flex h-full w-9 items-center justify-between bg-linear-to-b from-[#7a7d82] to-[#4c4f54] px-1">
          <Icon w={4} color="#a5a8ad"><path d="M.5 1V11M3 1V11" strokeDasharray="1 1" /></Icon>
          <button aria-label="Cerrar línea de comando"><Icon w={8} h={8} color="#f2f3f4"><path d="M1.5 1.5L6.5 6.5M6.5 1.5L1.5 6.5" strokeWidth="1.5" /></Icon></button>
          <button aria-label="Opciones"><Icon w={10} h={10} color="#f2f3f4"><path d="M4 4L9 9" strokeWidth="2" /><path d="M1 3A2 2 0 0 0 5 4A2 2 0 0 0 3.5 1" strokeWidth="1.3" /></Icon></button>
        </div>
        <span className="ml-1 flex items-center gap-[2px]">
          {icons.rotate}
          <span className="text-[#777]">-</span>
        </span>
        <label htmlFor="command" className="ml-1 font-bold text-[#111]">GIRA</label>
        <input id="command" defaultValue="Designe objetos:" className="ml-[3px] min-w-0 flex-1 text-[#111] outline-none" />
        <svg width="5" height="3" viewBox="0 0 5 3" className="mr-[3px]" aria-hidden="true"><path d="M0 3H5L2.5 0Z" fill="#222" /></svg>
      </div>
    </div>
  );
}

function Canvas() {
  return (
    <div className="flex flex-1">
      <main className="relative min-w-0 flex-1 bg-[#1f2731]">
        <Drawing />
        <div className="absolute inset-y-0 left-0 w-px bg-[#8795a3]" />
        <p className="absolute top-[3px] left-1 text-[8px] leading-[10px] text-[#d5d8dc]">[−][Superior][Estructura alámbrica 2D]</p>
        <div className="absolute top-[5px] right-[7px] flex gap-[6px]"><WindowButtons /></div>
        <ViewCube />
        <NavigationBar />
        <div role="tooltip" className="absolute top-[153px] left-[106px] h-[13px] w-[73px] border border-[#0f1215] bg-[#a6a9ad] px-[3px] font-['DejaVu_Sans',sans-serif] text-[7px] leading-[11px] text-[#23262b]">
          Designe objetos:
        </div>
        <CommandLine />
      </main>
      <div className="flex w-[13px] shrink-0 flex-col items-center justify-between border-r border-[#9a9da2] bg-[#edeef0] py-1">
        <svg width="5" height="3" viewBox="0 0 5 3" aria-hidden="true"><path d="M0 3H5L2.5 0Z" fill="#333" /></svg>
        <span className="h-[10px] w-[10px] border border-[#9da0a5] bg-[#dcdee1]" />
        <Caret />
      </div>
    </div>
  );
}

function LayoutTabs() {
  const arrows = ['M1 0V6M6 0L2 3L6 6Z', 'M5 0L1 3L5 6Z', 'M1 0L5 3L1 6Z', 'M6 0V6M1 0L5 3L1 6Z'];

  return (
    <div className="flex h-[10px] items-center border-b border-[#8e9196] bg-[#ecedee] font-['Liberation_Sans',sans-serif] text-[8px] leading-[9px]">
      <div className="flex w-[45px] justify-between px-[3px]">
        {arrows.map((d) => (
          <button key={d} aria-label="Desplazar fichas">
            <svg width="7" height="6" viewBox="0 0 7 6" aria-hidden="true"><path d={d} fill="#444" stroke="#444" strokeWidth=".5" /></svg>
          </button>
        ))}
      </div>
      <button className="h-full bg-[#1f2731] px-[7px] text-[#e4e6e9] [clip-path:polygon(0_0,100%_0,88%_100%,12%_100%)]">Modelo</button>
      <button className="ml-1 text-[#222]">Presentación1</button>
      <span className="mx-1 text-[#444]">/</span>
      <button className="text-[#222]">Presentación2</button>
      <span className="ml-1 text-[#444]">/</span>
      <div className="ml-auto flex h-full w-[300px] items-center justify-between border-l border-[#aaadb2] pr-[4px] pl-2">
        <svg width="3" height="5" viewBox="0 0 3 5" aria-hidden="true"><path d="M3 0V5L0 2.5Z" fill="#222" /></svg>
        <span className="h-[9px] w-[10px] border border-[#9da0a5] bg-[#dcdee1]" />
        <svg width="3" height="5" viewBox="0 0 3 5" aria-hidden="true"><path d="M0 0V5L3 2.5Z" fill="#222" /></svg>
      </div>
      <div className="w-[13px]" />
    </div>
  );
}

const modes = [
  { name: 'Inferencia', on: false, d: 'M6 1V9M2 5H8M9 7L11 9' },
  { name: 'Forzcursor', on: false, d: 'M2 9H10V3H6' },
  { name: 'Rejilla', on: true, d: 'M1 2H11M1 5H11M1 8H11M3 1V10M6 1V10M9 1V10' },
  { name: 'Orto', on: false, d: 'M2 1V9H10' },
  { name: 'Polar', on: false, d: 'M2 7A4 3 0 1 1 6 9M6 6L10 2M6 6H9' },
  { name: 'Refent', on: true, fill: '#f2f8fb', d: 'M3 2H10V9H3ZM2 1H4V3' },
  { name: 'Refent 3D', on: false, fill: '#e6e8ea', d: 'M2 3H8V9H2ZM2 3L4 1H10V7L8 9' },
  { name: 'Rastreo', on: true, d: 'M9 2L2 9H10' },
  { name: 'SCP dinámico', on: true, d: 'M2 1V9H10M2 9L9 2' },
  { name: 'Dinámica', on: true, d: 'M4 1V7M2 4H6M5 7H10V9H5Z' },
  { name: 'Grosor', on: false, d: 'M2 5H10M6 1V9' },
  { name: 'Transparencia', on: true, fill: '#8fc0ee', d: 'M2 2H10V9H2Z' },
  { name: 'Propiedades rápidas', on: false, d: 'M3 2H9V9H3ZM6 2V9M3 4H9' },
  { name: 'Ciclo', on: false, d: 'M2 2H6V7M7 6H10V9H7Z' },
  { name: 'Control', on: false, fill: '#f4f5f6', d: 'M5 1H7V4H10V6H7V9H5V6H2V4H5Z' },
];

function StatusBar() {
  return (
    <footer className="flex h-[14px] items-center bg-linear-to-b from-[#a5a8ae] to-[#787c84] font-['Liberation_Sans',sans-serif] text-[8px] text-[#16181b]">
      <output className="w-[129px] shrink-0 pl-[9px]">670.5333, 1894.6900, 0.0000</output>
      <div className="grid h-3 w-[229px] shrink-0 grid-cols-15 gap-px">
        {modes.map((mode) => (
          <button
            key={mode.name}
            aria-label={mode.name}
            className={clsx('flex items-center justify-center', mode.on ? 'bg-[#a8d4e4]' : 'bg-[#b0b3b9]')}
          >
            <Icon h={10} color="#2c3540"><path d={mode.d} fill={mode.fill ?? 'none'} /></Icon>
          </button>
        ))}
      </div>
      <div className="ml-auto flex h-3 items-center gap-[3px]">
        <button className="h-full bg-[#b6b9be] px-[2px]">MODELO</button>
        <button aria-label="Vista rápida" className="bg-[#b6b9be]"><Icon color="#22262b"><path d="M2 2H10V10H2ZM4 4L8 8M8 5V8H5" fill="#e9ebed" /></Icon></button>
        <button aria-label="Presentaciones" className="bg-[#b6b9be]"><Icon w={15} color="#22262b"><path d="M1.5 3H7V8H1.5ZM8 3H13.5V8H8ZM2 10H13" fill="#e9ebed" /></Icon></button>
        <button className="ml-1 flex h-full items-center gap-[2px] bg-[#a4a7ad] px-[2px]">
          <Icon color="#f4f5f6"><path d="M6 1V5L2 10M6 5L10 10M4 7H8" strokeWidth="1.3" /></Icon>
          1:1
          <Caret />
        </button>
        <button aria-label="Visibilidad de anotación" className="bg-[#b6b9be]"><Icon color="#f4f5f6"><path d="M5 1V5L1.5 10M5 5L8 10" strokeWidth="1.3" /><circle cx="9" cy="8" r="2" fill="#f2b35f" stroke="none" /></Icon></button>
        <button aria-label="Escala automática" className="bg-[#9b9ea4]"><Icon color="#c9ccd0"><path d="M6 1V5L2 10M6 5L10 10M4 7H8" /></Icon></button>
        <button aria-label="Espacio de trabajo" className="ml-2 bg-[#b6b9be]"><Icon color="#2a2d31"><circle cx="6" cy="6" r="4" strokeDasharray="2 1" strokeWidth="1.5" /><circle cx="6" cy="6" r="1.5" /></Icon></button>
        <button aria-label="Bloquear ventanas" className="bg-[#a4a7ad]"><Icon color="#2a2d31"><path d="M2 5.5H7.5V10H2Z" fill="#e4e6e9" /><path d="M6 5V3.5A2 2 0 0 1 10.5 3.5V6" /></Icon></button>
        <button aria-label="Hardware" className="bg-[#a4a7ad]"><Icon color="#4d6482"><path d="M1.5 3H9V7H1.5Z" fill="#b9cbe2" /><circle cx="9" cy="8.5" r="2" fill="#efd469" stroke="none" /></Icon></button>
        <button aria-label="Aislar objetos" className="bg-[#a8c8d8]"><Icon color="#3d5a72"><path d="M2 1V11M2 2.5H10V6H2" fill="#e8e49d" /><path d="M4 9L8 7L10 10Z" fill="#c9d97c" /></Icon></button>
        <button aria-label="Iluminar" className="bg-[#a4a7ad]"><Icon color="#8f6f2f"><path d="M6 1.5C3.5 1.5 2.5 3 2.5 4.5C2.5 6 4.5 7 4.5 9H7.5C7.5 7 9.5 6 9.5 4.5C9.5 3 8.5 1.5 6 1.5Z" fill="#f8d98a" /></Icon></button>
        <button aria-label="Menú de barra de estado" className="px-[2px]"><Caret /></button>
        <button aria-label="Limpiar pantalla" className="mr-[2px] bg-[#b6b9be]"><Icon color="#3c5374"><path d="M1.5 2H10.5V10H1.5Z" fill="#eef1f5" /><path d="M2 3H10" strokeWidth="1.5" /></Icon></button>
      </div>
    </footer>
  );
}

function App() {
  return (
    <div className="flex min-h-screen flex-col font-['Noto_Sans',sans-serif] text-[7px]">
      <Header />
      <Ribbon />
      <Canvas />
      <LayoutTabs />
      <StatusBar />
    </div>
  );
}

export default App;
